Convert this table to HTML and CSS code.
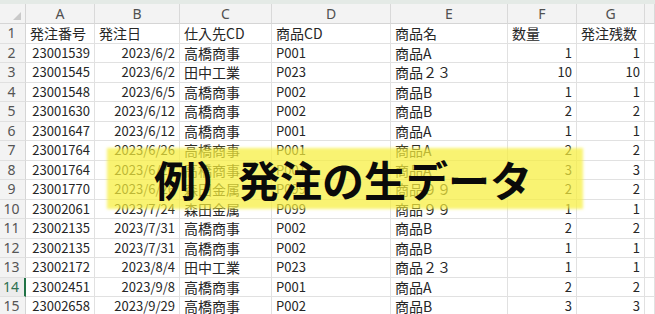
FILE: index.html
```html
<!DOCTYPE html>
<html lang="ja">
<head>
<meta charset="utf-8">
<title>発注の生データ</title>
<link rel="stylesheet" href="styles.css">
</head>
<body>
<div class="screen">
  <div class="topstrip"></div>
  <div class="sheet">
    <div class="row colhdr">
      <div class="corner"><span class="tri"></span></div>
      <div class="ch">A</div><div class="ch">B</div><div class="ch">C</div><div class="ch">D</div><div class="ch">E</div><div class="ch">F</div><div class="ch">G</div><div class="ch"></div>
    </div>
    <div class="row"><div class="rh">1</div><div class="c">発注番号</div><div class="c">発注日</div><div class="c">仕入先CD</div><div class="c">商品CD</div><div class="c">商品名</div><div class="c">数量</div><div class="c">発注残数</div><div class="c"></div></div>
    <div class="row"><div class="rh">2</div><div class="c r n">23001539</div><div class="c r n">2023/6/2</div><div class="c">高橋商事</div><div class="c n">P001</div><div class="c">商品A</div><div class="c r n">1</div><div class="c r n">1</div><div class="c"></div></div>
    <div class="row"><div class="rh">3</div><div class="c r n">23001545</div><div class="c r n">2023/6/2</div><div class="c">田中工業</div><div class="c n">P023</div><div class="c">商品２３</div><div class="c r n">10</div><div class="c r n">10</div><div class="c"></div></div>
    <div class="row"><div class="rh">4</div><div class="c r n">23001548</div><div class="c r n">2023/6/5</div><div class="c">高橋商事</div><div class="c n">P002</div><div class="c">商品B</div><div class="c r n">1</div><div class="c r n">1</div><div class="c"></div></div>
    <div class="row"><div class="rh">5</div><div class="c r n">23001630</div><div class="c r n">2023/6/12</div><div class="c">高橋商事</div><div class="c n">P002</div><div class="c">商品B</div><div class="c r n">2</div><div class="c r n">2</div><div class="c"></div></div>
    <div class="row"><div class="rh">6</div><div class="c r n">23001647</div><div class="c r n">2023/6/12</div><div class="c">高橋商事</div><div class="c n">P001</div><div class="c">商品A</div><div class="c r n">1</div><div class="c r n">1</div><div class="c"></div></div>
    <div class="row"><div class="rh">7</div><div class="c r n">23001764</div><div class="c r n">2023/6/26</div><div class="c">高橋商事</div><div class="c n">P001</div><div class="c">商品A</div><div class="c r n">2</div><div class="c r n">2</div><div class="c"></div></div>
    <div class="row"><div class="rh">8</div><div class="c r n">23001764</div><div class="c r n">2023/6/26</div><div class="c">高橋商事</div><div class="c n">P001</div><div class="c">商品A</div><div class="c r n">3</div><div class="c r n">3</div><div class="c"></div></div>
    <div class="row"><div class="rh">9</div><div class="c r n">23001770</div><div class="c r n">2023/6/26</div><div class="c">森田金属</div><div class="c n">P099</div><div class="c">商品９９</div><div class="c r n">2</div><div class="c r n">2</div><div class="c"></div></div>
    <div class="row"><div class="rh">10</div><div class="c r n">23002061</div><div class="c r n">2023/7/24</div><div class="c">森田金属</div><div class="c n">P099</div><div class="c">商品９９</div><div class="c r n">1</div><div class="c r n">1</div><div class="c"></div></div>
    <div class="row"><div class="rh">11</div><div class="c r n">23002135</div><div class="c r n">2023/7/31</div><div class="c">高橋商事</div><div class="c n">P002</div><div class="c">商品B</div><div class="c r n">2</div><div class="c r n">2</div><div class="c"></div></div>
    <div class="row"><div class="rh">12</div><div class="c r n">23002135</div><div class="c r n">2023/7/31</div><div class="c">高橋商事</div><div class="c n">P002</div><div class="c">商品B</div><div class="c r n">1</div><div class="c r n">1</div><div class="c"></div></div>
    <div class="row"><div class="rh">13</div><div class="c r n">23002172</div><div class="c r n">2023/8/4</div><div class="c">田中工業</div><div class="c n">P023</div><div class="c">商品２３</div><div class="c r n">1</div><div class="c r n">1</div><div class="c"></div></div>
    <div class="row"><div class="rh sel">14</div><div class="c r n">23002451</div><div class="c r n">2023/9/8</div><div class="c">高橋商事</div><div class="c n">P001</div><div class="c">商品A</div><div class="c r n">2</div><div class="c r n">2</div><div class="c"></div></div>
    <div class="row"><div class="rh">15</div><div class="c r n">23002658</div><div class="c r n">2023/9/29</div><div class="c">高橋商事</div><div class="c n">P002</div><div class="c">商品B</div><div class="c r n">3</div><div class="c r n">3</div><div class="c"></div></div>
  </div>
  <div class="callout">
    <div class="marker"></div>
    <div class="caption">例）発注の生データ</div>
  </div>
</div>
</body>
</html>
```

FILE: styles.css
```css
* { box-sizing: border-box; }
html, body { margin: 0; padding: 0; background: #fff; }
body {
  font-family: "Noto Sans CJK JP", "Noto Sans", sans-serif;
  color: #262626;
  width: 655px;
  height: 314px;
  overflow: hidden;
}
.screen { position: relative; width: 655px; height: 314px; overflow: hidden; }
.topstrip { height: 4px; background: #e4eae6; }
.sheet { display: flex; flex-direction: column; }
.row {
  display: grid;
  grid-template-columns: 26px 69px 85px 92px 119px 117px 69px 68px 1fr;
  height: 19.5px;
  flex: none;
}
.row.colhdr { height: 20px; }
.corner {
  position: relative;
  background: #f3f3f3;
  border-right: 1px solid #d5d5d5;
  border-bottom: 1px solid #d5d5d5;
}
.tri {
  position: absolute;
  right: 4px;
  bottom: 3px;
  width: 0; height: 0;
  border-left: 8px solid transparent;
  border-bottom: 8px solid #c9c9c9;
}
.ch {
  background: #f3f3f3;
  border-right: 1px solid #d9d9d9;
  border-bottom: 1px solid #d5d5d5;
  font-family: "Noto Sans", sans-serif;
  font-size: 14px;
  line-height: 19px;
  text-align: center;
  color: #505050;
}
.rh {
  background: #f3f3f3;
  border-right: 1px solid #d5d5d5;
  border-bottom: 1px solid #e0e0e0;
  font-family: "Noto Sans", sans-serif;
  font-size: 14px;
  line-height: 18.5px;
  text-align: center;
  color: #555;
  padding-right: 2px;
}
.rh.sel {
  color: #2f7050;
  border-right: 2px solid #217346;
  background: #ececec;
}
.c {
  border-right: 1px solid #e1e1e1;
  border-bottom: 1px solid #e1e1e1;
  font-size: 14px;
  line-height: 18.5px;
  padding: 0 3px 0 4px;
  white-space: nowrap;
  overflow: hidden;
}
.c.n { font-size: 13px; }
.c.r { text-align: right; padding-right: 4px; }

.callout {
  position: absolute;
  left: 107px;
  top: 148px;
  width: 476px;
  height: 61px;
}
.marker {
  position: absolute;
  inset: 0;
  background: rgba(246, 238, 60, 0.72);
  filter: blur(1.5px);
}
.caption {
  position: absolute;
  left: 47px;
  top: 0;
  height: 61px;
  line-height: 61px;
  font-size: 42px;
  font-weight: 700;
  color: #0a0a0a;
  white-space: nowrap;
  letter-spacing: 0;
}
```
